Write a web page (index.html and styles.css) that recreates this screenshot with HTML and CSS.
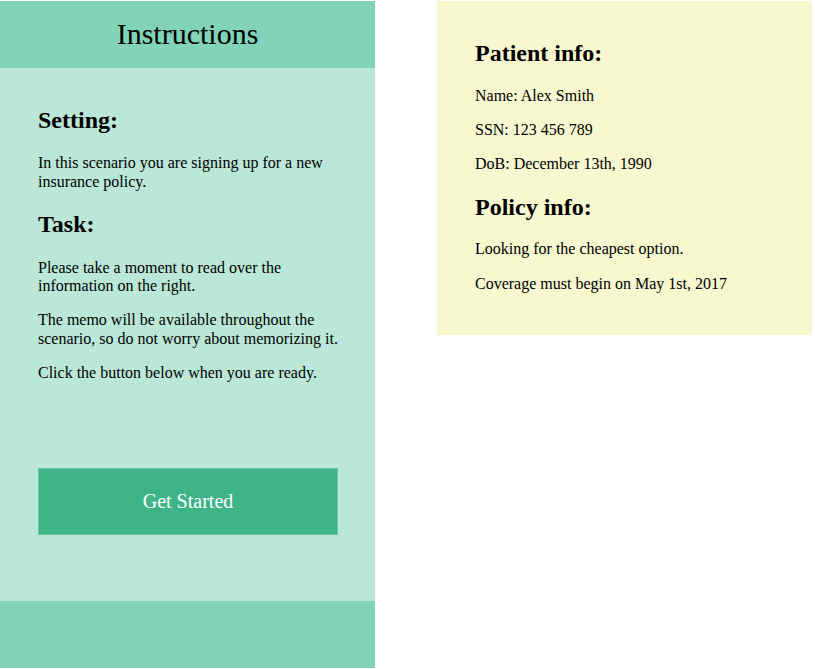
FILE: index.html
```html
<!DOCTYPE html>
<html>
<head>
<meta charset="utf-8">
<link rel="stylesheet" href="styles.css">
</head>
<body>
<div class="page">
  <section class="instructions">
    <header class="instructions-header">Instructions</header>
    <div class="instructions-body">
      <h2>Setting:</h2>
      <p>In this scenario you are signing up for a new insurance policy.</p>
      <h2>Task:</h2>
      <p>Please take a moment to read over the information on the right.</p>
      <p>The memo will be available throughout the scenario, so do not worry about memorizing it.</p>
      <p>Click the button below when you are ready.</p>
      <button class="start-btn">Get Started</button>
    </div>
    <footer class="instructions-footer"></footer>
  </section>
  <section class="memo">
    <h2>Patient info:</h2>
    <p>Name: Alex Smith</p>
    <p>SSN: 123 456 789</p>
    <p>DoB: December 13th, 1990</p>
    <h2>Policy info:</h2>
    <p>Looking for the cheapest option.</p>
    <p>Coverage must begin on May 1st, 2017</p>
  </section>
</div>
</body>
</html>
```

FILE: styles.css
```css
html, body {
  margin: 0;
  padding: 0;
  background: #ffffff;
  font-family: "Liberation Serif", "Times New Roman", serif;
  color: #000;
}
.page {
  display: flex;
  align-items: flex-start;
  gap: 62px;
  padding-top: 1px;
}
.instructions {
  width: 375px;
  display: flex;
  flex-direction: column;
}
.instructions-header {
  height: 67px;
  background: #81d4b7;
  display: flex;
  align-items: center;
  justify-content: center;
  font-size: 30px;
  padding-bottom: 1px;
  box-sizing: border-box;
}
.instructions-body {
  display: block;
  background: #bae7d7;
  height: 533px;
  box-sizing: border-box;
  padding: 19px 24px 0 38px;
}
h2 {
  font-size: 24px;
  font-weight: bold;
  margin: 19.92px 0;
  line-height: 27.6px;
}
p {
  font-size: 16px;
  line-height: 18.4px;
  margin: 16px 0;
}
.start-btn {
  display: block;
  margin-top: 85px;
  width: 300px;
  height: 67px;
  box-sizing: border-box;
  background: #3db589;
  border: 1px solid #6cccaa;
  color: #ffffff;
  font-family: "Liberation Serif", "Times New Roman", serif;
  font-size: 20px;
  padding: 0;
  cursor: pointer;
}
.instructions-footer {
  height: 67px;
  background: #81d4b7;
}
.memo {
  width: 375px;
  height: 334px;
  box-sizing: border-box;
  background: #f8f8d0;
  padding: 19px 24px 0 38px;
}
.memo h2 {
  margin-bottom: 19px;
}
```
